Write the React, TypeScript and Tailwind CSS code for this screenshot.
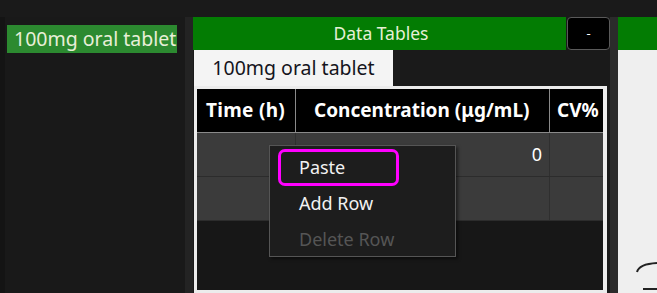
import React from 'react';

const font = { fontFamily: '"Noto Sans", "Open Sans", sans-serif' };

const ContextMenu = () => {
  return (
    <div className="absolute left-[72px] top-[56px] w-[187px] h-[112px] bg-[#1d1d1d] border border-[#555] pt-[3px] shadow-[2px_2px_3px_rgba(0,0,0,0.5)]">
      <div className="relative h-[36px] flex items-center pl-[29px] text-[18px] text-[#f2f2f2]">
        <span>Paste</span>
        <div className="absolute left-[8px] top-[0px] w-[121px] h-[37px] border-[3px] border-[#ff00ff] rounded-[7px]" />
      </div>
      <div className="h-[36px] flex items-center pl-[29px] text-[18px] text-[#f2f2f2]">Add Row</div>
      <div className="h-[36px] flex items-center pl-[29px] text-[18px] text-[#555]">Delete Row</div>
    </div>
  );
};

const DataTable = () => {
  return (
    <div className="relative flex-1 border-[3px] border-r-[4px] border-[#ececec] bg-[#171717] overflow-hidden">
      {/* header */}
      <div className="flex h-[44px] bg-black border-b border-[#8a8a8a] text-white font-bold text-[19px]">
        <div className="w-[99px] flex items-center pl-[9px] border-r border-[#8a8a8a] shrink-0 whitespace-nowrap tracking-[0.3px]">
          Time (h)
        </div>
        <div className="w-[254px] flex items-center pl-[18px] border-r border-[#8a8a8a] shrink-0 whitespace-nowrap">
          Concentration (μg/mL)
        </div>
        <div className="flex items-center pl-[7px] whitespace-nowrap">CV%</div>
      </div>
      {/* rows */}
      {[0, 1].map((r) => (
        <div key={r} className="flex h-[44px] bg-[#3b3b3b] border-b border-[#2c2c2c] text-[18px] text-white">
          <div className="w-[99px] border-r border-[#2f2f2f] shrink-0" />
          <div className="w-[254px] flex items-center justify-end pr-[7px] border-r border-[#2f2f2f] shrink-0">
            {r === 0 ? '0' : ''}
          </div>
          <div className="flex-1" />
        </div>
      ))}
      <ContextMenu />
    </div>
  );
};

const App = () => {
  return (
    <div className="w-[657px] h-[293px] bg-[#1a1a1a] flex flex-col overflow-hidden" style={font}>
      <div className="h-[17px] shrink-0" />
      <div className="flex flex-1 min-h-0">
        {/* left list */}
        <div className="w-[185px] shrink-0 bg-[#191919] border-l-[5px] border-[#141414] pt-[8px] pl-[2px]">
          <div className="w-[170px] h-[28px] bg-[#2c8a30] text-[#e8efd8] text-[19.5px] leading-[28px] pl-[7px] whitespace-nowrap">
            100mg oral tablet
          </div>
        </div>
        <div className="w-[8px] shrink-0 bg-[#232323]" />

        {/* data tables */}
        <div className="w-[417px] shrink-0 flex flex-col">
          <div className="flex h-[33px] shrink-0">
            <div className="w-[373px] bg-[#037c03] flex items-center justify-center text-[17.5px] text-[#e6f0d6] pl-[3px]">
              Data Tables
            </div>
            <div className="w-[1px]" />
            <button className="w-[43px] bg-black border border-[#5a5a5a] rounded-[4px] text-white text-[13px] leading-none flex items-center justify-center">
              -
            </button>
          </div>
          <div className="flex h-[36px] shrink-0">
            <div className="ml-[1px] w-[199px] bg-[#f4f4f4] flex items-center justify-center text-[19.5px] text-[#141420]">
              100mg oral tablet
            </div>
          </div>
          <div className="flex-1 flex min-h-0 ml-[1px] mr-[3px]">
            <DataTable />
          </div>
        </div>
        <div className="w-[8px] shrink-0 bg-[#2b2b2b]" />

        {/* right panel: chart, only the corner of its axis is visible */}
        <div className="flex-1 flex flex-col">
          <div className="h-[33px] bg-[#037c03] shrink-0" />
          <div className="flex-1 bg-[#efefef] flex flex-col justify-end overflow-hidden">
            <svg width="39" height="34" viewBox="0 0 39 34" fill="none" stroke="#222" strokeWidth="2">
              <path d="M19 13 Q21 5 39 4" />
              <path d="M25 30 H39" />
            </svg>
          </div>
        </div>
      </div>
    </div>
  );
};

export default App;
